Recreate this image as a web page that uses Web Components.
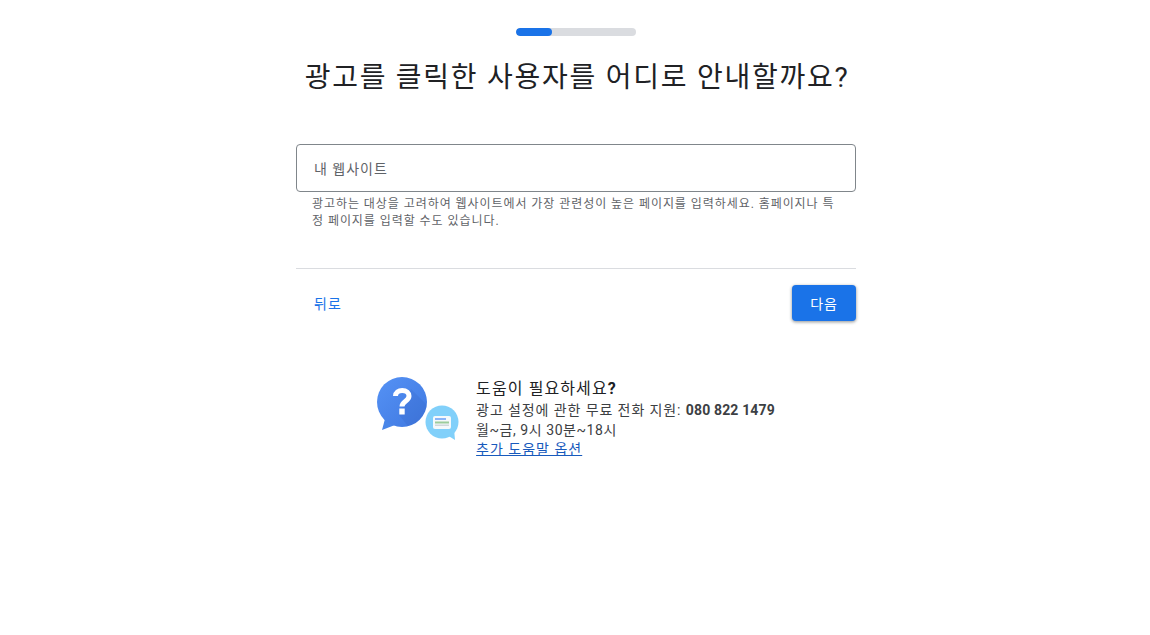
<!DOCTYPE html>
<html lang="ko">
<head>
<meta charset="utf-8">
<title>광고 설정</title>
<style>
html, body { margin: 0; background: #fff; }
body { font-family: Roboto, "Noto Sans CJK KR", sans-serif; color: #202124; }
</style>
</head>
<body>
<setup-page>
  <step-progress slot="progress"></step-progress>
  <span slot="title">광고를 클릭한 사용자를 어디로 안내할까요?</span>
  <url-field slot="field" label="내 웹사이트">광고하는 대상을 고려하여 웹사이트에서 가장 관련성이 높은 페이지를 입력하세요. 홈페이지나 특정 페이지를 입력할 수도 있습니다.</url-field>
  <form-actions slot="actions"></form-actions>
  <help-box slot="help"></help-box>
</setup-page>

<script>
const pageTpl = document.createElement("template");
pageTpl.innerHTML = `
<style>
:host {
  display: flex;
  flex-direction: column;
  align-items: center;
  width: 1152px;
  padding-top: 28px;
}
.title {
  margin: 22px 0 0;
  padding-left: 2px;
  height: 40px;
  font-size: 28px;
  line-height: 40px;
  font-weight: 400;
  letter-spacing: 1.74px;
  color: #202124;
  white-space: nowrap;
}
.main {
  width: 560px;
  margin-top: 46px;
}
.help {
  margin-top: 56px;
}
</style>
<slot name="progress"></slot>
<h1 class="title"><slot name="title"></slot></h1>
<div class="main">
  <slot name="field"></slot>
  <slot name="actions"></slot>
</div>
<div class="help"><slot name="help"></slot></div>
`;

class SetupPageElement extends HTMLElement {
  constructor() {
    super();
    this.attachShadow({ mode: "open" });
    this.shadowRoot.append(pageTpl.content.cloneNode(true));
  }
}

const progressTpl = document.createElement("template");
progressTpl.innerHTML = `
<style>
:host {
  display: block;
  width: 120px;
  height: 8px;
  border-radius: 4px;
  background: #dadce0;
  overflow: hidden;
}
.bar {
  width: 36px;
  height: 8px;
  border-radius: 4px;
  background: #1a73e8;
}
</style>
<div class="bar"></div>
`;

class StepProgressElement extends HTMLElement {
  constructor() {
    super();
    this.attachShadow({ mode: "open" });
    this.shadowRoot.append(progressTpl.content.cloneNode(true));
  }
}

const fieldTpl = document.createElement("template");
fieldTpl.innerHTML = `
<style>
:host {
  display: block;
}
.box {
  box-sizing: border-box;
  height: 48px;
  padding: 0 17px;
  border: 1px solid #80868b;
  border-radius: 4px;
  display: flex;
  align-items: center;
  font-size: 14px;
  letter-spacing: 1px;
  color: #5f6368;
}
.hint {
  margin: 4px 16px 0;
  font-size: 12px;
  line-height: 17px;
  letter-spacing: 0.94px;
  word-break: break-all;
  color: #5f6368;
}
</style>
<div class="box" id="label"></div>
<div class="hint"><slot></slot></div>
`;

class UrlFieldElement extends HTMLElement {
  constructor() {
    super();
    this.attachShadow({ mode: "open" });
    this.shadowRoot.append(fieldTpl.content.cloneNode(true));
    this.shadowRoot.getElementById("label").textContent = this.getAttribute("label");
  }
}

const actionsTpl = document.createElement("template");
actionsTpl.innerHTML = `
<style>
:host {
  display: block;
  margin-top: 38px;
  padding-top: 16px;
  border-top: 1px solid #dadce0;
}
.row {
  display: flex;
  justify-content: space-between;
  align-items: center;
}
button {
  height: 36px;
  border: 0;
  border-radius: 4px;
  font: inherit;
  font-size: 14px;
  font-weight: 400;
  letter-spacing: 1px;
  padding: 0 18px;
  cursor: pointer;
}
.back {
  background: none;
  color: #1a73e8;
}
.next {
  background: #1a73e8;
  color: #fff;
  box-shadow: 0 1px 3px rgba(60,64,67,.4), 0 1px 3px 1px rgba(60,64,67,.15);
}
</style>
<div class="row">
  <button class="back">뒤로</button>
  <button class="next">다음</button>
</div>
`;

class FormActionsElement extends HTMLElement {
  constructor() {
    super();
    this.attachShadow({ mode: "open" });
    this.shadowRoot.append(actionsTpl.content.cloneNode(true));
  }
}

const helpTpl = document.createElement("template");
helpTpl.innerHTML = `
<style>
:host {
  display: flex;
  gap: 15px;
  font-size: 14px;
  line-height: 20px;
  color: #3c4043;
}
svg {
  display: block;
  width: 84px;
  height: 66px;
}
.title {
  font-size: 16px;
  line-height: 23px;
  letter-spacing: 1.1px;
  color: #202124;
}
.ko { letter-spacing: 0.9px; }
.phone { letter-spacing: 0.15px; }
.hours { margin-top: 1px; letter-spacing: 0.55px; line-height: 19px; }
.link { margin-top: -1px; letter-spacing: 1px; }
b { font-weight: 700; }
a { color: #185abc; }
</style>
<svg viewBox="0 0 84 66">
  <defs>
    <linearGradient id="big" x1="0" y1="0" x2="1" y2="1">
      <stop offset="0" stop-color="#5592f5"/>
      <stop offset="1" stop-color="#3f78e0"/>
    </linearGradient>
    <clipPath id="bigclip"><circle cx="25" cy="25" r="25"/></clipPath>
  </defs>
  <path d="M5 53L8.500 40 18 48z" fill="#4a86e8"/>
  <circle cx="25" cy="25" r="25" fill="url(#big)"/>
  <path d="M34 12L60 38 40 60 22 38z" fill="#1a3f8f" opacity=".1" clip-path="url(#bigclip)"/>
  <path d="M18.500 19c0-3.500 3-5.500 6.700-5.500 4.300 0 6.800 2.500 6.800 5.500 0 5.500-7 5-7 10.500" fill="none" stroke="#fff" stroke-width="5"/>
  <rect x="22.300" y="31.500" width="5.400" height="6" fill="#fff"/>
  <path d="M78 63L70 58 77 52z" fill="#81d0fa"/>
  <circle cx="65" cy="45" r="16.500" fill="#81d0fa"/>
  <rect x="56" y="39" width="18" height="13" rx="2" fill="#f5f9fb"/>
  <rect x="58" y="41" width="11" height="2" fill="#8ab4f8"/>
  <rect x="58" y="44.500" width="14" height="2" fill="#9ccc9c"/>
  <rect x="58" y="47.500" width="14" height="1.500" fill="#cfd8dc"/>
</svg>
<div>
  <div class="title">도움이 필요하세요<b>?</b></div>
  <div><span class="ko">광고 설정에 관한 무료 전화 지원: </span><b class="phone">080 822 1479</b></div>
  <div class="hours">월~금, 9시 30분~18시</div>
  <div class="link"><a href="#">추가 도움말 옵션</a></div>
</div>
`;

class HelpBoxElement extends HTMLElement {
  constructor() {
    super();
    this.attachShadow({ mode: "open" });
    this.shadowRoot.append(helpTpl.content.cloneNode(true));
  }
}

customElements.define("setup-page", SetupPageElement);
customElements.define("step-progress", StepProgressElement);
customElements.define("url-field", UrlFieldElement);
customElements.define("form-actions", FormActionsElement);
customElements.define("help-box", HelpBoxElement);
</script>
</body>
</html>
